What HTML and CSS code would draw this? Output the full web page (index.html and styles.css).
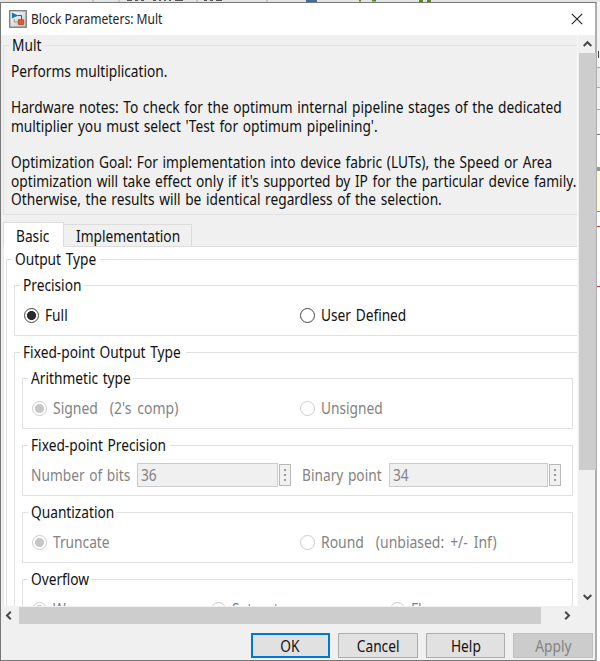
FILE: index.html
```html
<!DOCTYPE html>
<html lang="en">
<head>
<meta charset="utf-8">
<title>Block Parameters: Mult</title>
<link rel="stylesheet" href="styles.css">
</head>
<body>
<div class="desktop">
  <svg class="toolbar-edge" width="600" height="2" viewBox="0 0 600 2" aria-hidden="true">
    <path d="M93 0v2M119 0v2M197 0v2M267 0v2" stroke="#aaa"/>
    <path d="M127 .5h5M135 .5h3M141 .5h3M153 .5h3M159 .5h2M164 .5h2M169 .5h2M175 .5h8M204 .5h3M210 .5h3M216 .5h6" stroke="#555"/>
    <path d="M306 1h11" stroke="#416f9c" stroke-width="2"/>
    <path d="M359 .5h2M372 .5h4M419 1h4M427 1h4" stroke="#568324" stroke-width="2"/>
  </svg>
  <div class="dialog">
    <header class="titlebar">
      <svg class="app-icon" width="18" height="18" viewBox="0 0 18 18">
        <defs><linearGradient id="g" x2="1" y2="1"><stop stop-color="#fff"/><stop offset="1" stop-color="#bfc3c9"/></linearGradient></defs>
        <rect x=".75" y=".75" width="16.5" height="16.5" fill="url(#g)" stroke="#777" stroke-width="1.3"/>
        <path d="M9 5.5h3.5V9" fill="none" stroke="#555"/>
        <path d="M2.8 2.4v6.2L9.4 5.5z" fill="#1679b5"/>
        <rect x="9.3" y="9.6" width="5.4" height="5" rx=".6" fill="#e05a2a" stroke="#b3431c" stroke-width=".8"/>
        <path d="M9 12H5.3V9" fill="none" stroke="#888" stroke-width=".8"/>
      </svg>
      <h1 class="title"><span class="t">Block Parameters: Mult</span></h1>
      <svg class="close" width="12" height="12" viewBox="0 0 12 12"><path d="M.8.8l10.4 10.4M11.2.8L.8 11.2" stroke="#222" stroke-width="1.15"/></svg>
    </header>
    <div class="body">
      <main class="content">
        <fieldset class="group about">
          <legend class="w-mult"><span class="t">Mult</span></legend>
          <div class="text t">
            <p>Performs multiplication.</p>
            <p class="gap">Hardware notes: To check for the optimum internal pipeline stages of the dedicated</p>
            <p>multiplier you must select 'Test for optimum pipelining'.</p>
            <p class="gap">Optimization Goal: For implementation into device fabric (LUTs), the Speed or Area</p>
            <p>optimization will take effect only if it's supported by IP for the particular device family.</p>
            <p>Otherwise, the results will be identical regardless of the selection.</p>
          </div>
        </fieldset>
        <nav class="tabs"><div class="tab active"><span class="t">Basic</span></div><div class="tab impl"><span class="t">Implementation</span></div></nav>
        <section class="panel">
          <fieldset class="group output">
            <legend class="w-output"><span class="t">Output Type</span></legend>
            <fieldset class="group precision">
              <legend class="w-precision"><span class="t">Precision</span></legend>
              <div class="row"><label><i class="radio on"></i><span class="t">Full</span></label><label><i class="radio"></i><span class="t">User Defined</span></label></div>
            </fieldset>
            <fieldset class="group fixed">
              <legend class="w-fixed"><span class="t">Fixed-point Output Type</span></legend>
              <fieldset class="group sub">
                <legend class="w-arith"><span class="t">Arithmetic type</span></legend>
                <div class="row off"><label><i class="radio on"></i><span class="t loose">Signed&nbsp; (2's comp)</span></label><label><i class="radio"></i><span class="t">Unsigned</span></label></div>
              </fieldset>
              <fieldset class="group sub">
                <legend class="w-fpp"><span class="t">Fixed-point Precision</span></legend>
                <div class="fields off">
                  <div class="bits"><span class="t">Number of bits</span></div><div class="input"><span class="t">36</span></div><span class="more"><b></b><b></b><b></b></span>
                  <div class="point"><span class="t">Binary point</span></div><div class="input wide"><span class="t">34</span></div><span class="more"><b></b><b></b><b></b></span>
                </div>
              </fieldset>
              <fieldset class="group sub">
                <legend class="w-quant"><span class="t">Quantization</span></legend>
                <div class="row off"><label><i class="radio on"></i><span class="t">Truncate</span></label><label><i class="radio"></i><span class="t loose">Round&nbsp; (unbiased: +/- Inf)</span></label></div>
              </fieldset>
              <fieldset class="group sub">
                <legend class="w-over"><span class="t">Overflow</span></legend>
                <div class="row three off"><label><i class="radio on"></i><span class="t">Wrap</span></label><label><i class="radio"></i><span class="t">Saturate</span></label><label><i class="radio"></i><span class="t">Flag as error</span></label></div>
              </fieldset>
            </fieldset>
          </fieldset>
        </section>
      </main>
      <div class="vscroll">
        <svg width="17" height="18" viewBox="0 0 17 18"><path d="M4.7 11l3.8-3.8 3.8 3.8" fill="none" stroke="#484848" stroke-width="2"/></svg>
        <div class="vthumb"></div>
        <svg width="17" height="18" viewBox="0 0 17 18"><path d="M4.7 7l3.8 3.8L12.3 7" fill="none" stroke="#484848" stroke-width="2"/></svg>
      </div>
    </div>
    <div class="hscroll">
      <svg width="17" height="17" viewBox="0 0 17 17"><path d="M9.8 4.7L6 8.5l3.8 3.8" fill="none" stroke="#484848" stroke-width="2"/></svg>
      <div class="hthumb"></div>
      <svg width="18" height="17" viewBox="0 0 18 17"><path d="M7.2 4.7L11 8.5l-3.8 3.8" fill="none" stroke="#484848" stroke-width="2"/></svg>
    </div>
    <footer class="buttons">
      <button class="ok"><span class="t">OK</span></button><button><span class="t">Cancel</span></button><button><span class="t">Help</span></button><button disabled><span class="t">Apply</span></button>
    </footer>
  </div>
  <div class="behind"></div>
</div>
</body>
</html>
```
FILE: styles.css
```css
* { box-sizing: border-box; }
body { margin: 0; background: #fff; font: 15.5px/18px "Noto Sans", "Liberation Sans", sans-serif; color: #111; overflow: hidden; word-spacing: 1.2px; }
.desktop { width: 600px; height: 661px; display: grid; grid-template: 2px 659px / 597px 3px; overflow: hidden; }
.toolbar-edge { display: block; grid-column: 1 / 3; background: #e4e4e4; }
.dialog { border: 1px solid #777; border-right: 2px solid #adadad; background: #f0f0f0; display: flex; flex-direction: column; }
.behind { background: linear-gradient(#aaa, #aaa) 0 65px/3px 1px no-repeat, linear-gradient(#aaa, #aaa) 0 85px/3px 1px no-repeat, linear-gradient(#aaa, #aaa) 0 107px/3px 1px no-repeat, linear-gradient(#777, #777) 0 132px/3px 1px no-repeat, linear-gradient(#444, #444) 1px 49px/1px 7px no-repeat, linear-gradient(#e33, #e33) 0 224px/3px 1px no-repeat, linear-gradient(#e33, #e33) 0 284px/3px 1px no-repeat, linear-gradient(#f4f4f4 65px, #e8e8e8 65px 85px, #f4f4f4 85px 132px, #fff 132px 165px, #999 165px 169px, #ffc 169px 209px, #888 209px 210px, #fff 210px); }

/* condensed lettering */
.t { display: inline-block; transform: scaleX(.885); transform-origin: 0 50%; white-space: nowrap; vertical-align: top; }
.loose { word-spacing: 2.6px; transform: scaleX(.9); }

.titlebar { height: 32px; background: #fff; display: flex; align-items: center; padding: 0 12px 0 8px; flex: none; }
.app-icon { margin-bottom: 1px; }
.title { margin: 0 auto 0 4px; font-size: 14.2px; font-weight: 400; word-spacing: 0; color: #222; }
.title .t { transform: scaleX(.85); }
.close { margin-bottom: 1px; }
.body { display: flex; height: 571px; flex: none; }
.content { width: 576px; padding-left: 2px; overflow: hidden; }
.group { margin: 0; padding: 0; border: 1px solid #e0e0e0; min-width: 0; }
.group > legend { margin-left: 5px; padding: 0 0 0 3px; height: 18px; white-space: nowrap; }
.group.output > legend, .group.fixed > legend { margin-left: -2px; }
.group.about > legend { margin-left: -2px; }
.w-mult { width: 34px; }
.w-output { width: 88px; }
.w-precision { width: 64px; }
.w-fixed { width: 166px; }
.w-arith { width: 105px; }
.w-fpp { width: 142px; }
.w-quant { width: 88px; }
.w-over { width: 64px; }
.about { margin-top: 1px; width: 620px; height: 179px; padding-left: 7px; }
.text { margin-top: 8px; margin-left: -.3px; }
.text p { margin: 0; height: 18.3px; }
.text .gap { margin-top: 18.2px; }
.tabs { display: flex; height: 32px; align-items: flex-end; box-shadow: inset 0 -1px #dedede; }
.tab { border: 1px solid #dcdcdc; height: 23px; line-height: 22px; white-space: nowrap; }
.active { width: 61px; height: 25px; padding-left: 11.7px; background: #fff; border-bottom: 0; line-height: 26px; }
.impl { width: 128px; padding-left: 12px; border-left: 0; }
.panel { background: #fff; padding: 3px 0 0 2px; height: 500px; border-left: 1px solid #e8e8e8; }
.output { width: 640px; height: 450px; padding: 8px 0 0 7px; }
.precision { width: 640px; height: 60px; margin-bottom: 7px; }
.fixed { width: 620px; height: 420px; padding: 8px 0 0 7px; }
.sub { width: 551px; height: 60px; margin-bottom: 7px; }
.row { display: grid; grid-template-columns: 276px 1fr; padding: 12px 0 0 9px; }
.sub .row { grid-template-columns: 268px 1fr; }
.sub .row.three { grid-template-columns: 179px 179px 1fr; }
label { display: flex; align-items: center; gap: 5.7px; white-space: nowrap; }
.radio { width: 15px; height: 15px; border: 1px solid #444; border-radius: 50%; background: #fff; flex: none; }
.radio.on { background: radial-gradient(circle, #2b2b2b 4.2px, #fff 4.8px); }
.off { color: #838383; }
.off .radio { border-color: #ccc; }
.off .radio.on { background: radial-gradient(circle, #c6c6c6 4.2px, #fff 4.8px); }
.fields { display: flex; align-items: center; height: 24px; margin-top: 9px; padding-left: 8px; }
.bits { width: 106px; white-space: nowrap; }
.point { width: 87px; margin-left: 11px; white-space: nowrap; }
.input { width: 141px; height: 24px; border: 1px solid #ccc; background: #f0f0f0; padding-left: 3px; line-height: 22px; }
.wide { width: 159px; }
.more { width: 12px; height: 22px; margin-left: 1px; border: 1px solid #b8b8b8; background: #f1f1f1; display: flex; flex-direction: column; align-items: center; justify-content: center; gap: 3px; }
.more b { width: 2px; height: 2px; background: #999; }
.vscroll { width: 18px; padding: 0 0 0 1px; border-left: 1px solid #f8f8f8; display: flex; flex-direction: column; }
.vscroll svg, .hscroll svg { display: block; flex: none; }
.vthumb { width: 17px; height: 417px; background: #cdcdcd; margin-bottom: auto; }
.hscroll { height: 18px; padding-top: 1px; display: flex; flex: none; }
.hthumb { width: 522px; height: 17px; margin-left: 1px; margin-right: 17px; background: #cdcdcd; }
.buttons { display: flex; gap: 8px; padding: 9px 0 0 249.5px; }
button { width: 79.6px; height: 25px; padding: 0; border: 1px solid #adadad; background: #e1e1e1; font: 15.5px/20px "Noto Sans", sans-serif; color: #111; flex: none; }
button .t { transform-origin: 50% 50%; }
.ok { border: 2px solid #0078d7; }
button:disabled { background: #ccc; border-color: #bfbfbf; color: #838383; }
```
